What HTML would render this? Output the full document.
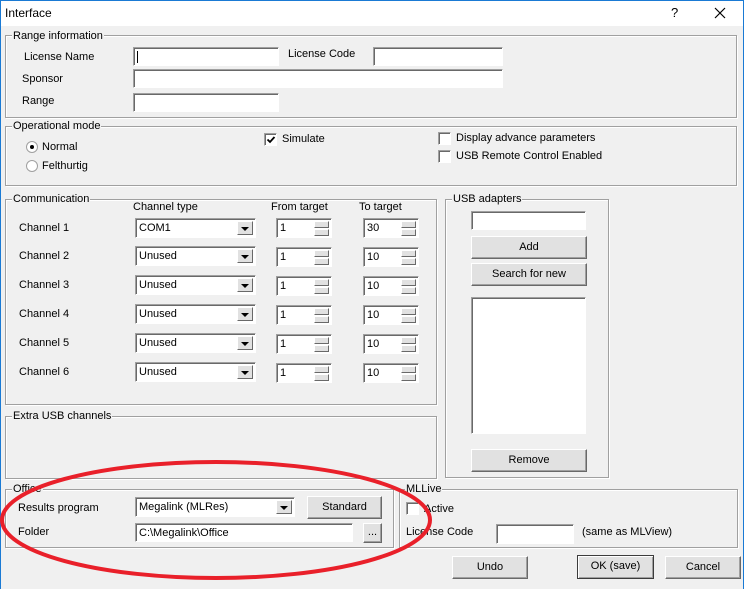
<!DOCTYPE html>
<html><head><meta charset="utf-8"><style>
*{box-sizing:border-box;margin:0;padding:0}
body{width:744px;height:589px;background:#f0f0f0;font-family:"Liberation Sans",sans-serif;font-size:11px;color:#000;position:relative;overflow:hidden}
.a{position:absolute;white-space:nowrap}
.t{margin-top:1px}
.win{position:absolute;left:0;top:0;width:744px;height:589px;border:1px solid #1a7ad4;border-bottom:none}
.title{position:absolute;left:1px;top:1px;width:742px;height:25px;background:#fff}
.g{position:absolute;border:1px solid #a0a0a0;box-shadow:inset 1px 1px #fff,1px 1px #fff}
.gl{position:absolute;background:#f0f0f0;padding:0 1px;line-height:12px}
.in{position:absolute;background:#fff;border:1px solid;border-color:#a0a0a0 #fff #fff #a0a0a0;box-shadow:inset 1px 1px #696969;padding:3px 3px;line-height:13px}
.btn{position:absolute;background:#e1e1e1;border:1px solid;border-color:#fff #696969 #696969 #fff;box-shadow:inset -1px -1px #a0a0a0;text-align:center;line-height:20px}
.dd{position:absolute;right:2px;top:2px;width:16px;bottom:2px;background:#e1e1e1;border:1px solid;border-color:#fff #696969 #696969 #fff}
.dd:after{content:"";position:absolute;left:3px;top:5px;border:4px solid transparent;border-top:4px solid #000;border-bottom:none}
.sp{position:absolute;right:2px;top:2px;width:15px;bottom:2px}
.sp i{position:absolute;left:0;width:15px;height:7px;background:#e1e1e1;border:1px solid;border-color:#fff #696969 #696969 #fff}
.cb{position:absolute;width:13px;height:13px;background:#fff;border:1px solid;border-color:#a0a0a0 #fff #fff #a0a0a0;box-shadow:inset 1px 1px #696969}
.rd{position:absolute;width:12px;height:12px;border-radius:50%;background:#fff;border:1px solid #a0a0a0}
</style></head><body>
<div class="win"></div>
<div class="title"></div>
<div class="a" style="left:5px;top:6px;font-size:12px">Interface</div>
<div class="a" style="left:671px;top:5px;font-size:13px">?</div>
<svg class="a" style="left:714px;top:7px" width="12" height="12"><path d="M1 1L11 11M11 1L1 11" stroke="#000" stroke-width="1.2"/></svg>

<div class="g" style="left:5px;top:35px;width:732px;height:83px"></div>
<div class="gl a" style="left:12px;top:30px">Range information</div>
<div class="a" style="left:24px;top:51px">License Name</div>
<div class="in" style="left:133px;top:47px;width:146px;height:19px"><span style="display:inline-block;width:1px;height:12px;background:#000"></span></div>
<div class="a" style="left:288px;top:48px">License Code</div>
<div class="in" style="left:373px;top:47px;width:130px;height:19px"></div>
<div class="a" style="left:22px;top:73px">Sponsor</div>
<div class="in" style="left:133px;top:69px;width:370px;height:19px"></div>
<div class="a" style="left:22px;top:95px">Range</div>
<div class="in" style="left:133px;top:93px;width:146px;height:19px"></div>

<div class="g" style="left:5px;top:126px;width:732px;height:60px"></div>
<div class="gl a" style="left:12px;top:120px">Operational mode</div>
<div class="rd" style="left:26px;top:141px"><span style="position:absolute;left:3px;top:3px;width:4px;height:4px;background:#000;border-radius:50%"></span></div>
<div class="a" style="left:42px;top:141px">Normal</div>
<div class="rd" style="left:26px;top:160px"></div>
<div class="a" style="left:42px;top:160px">Felthurtig</div>
<div class="cb" style="left:264px;top:133px"><svg style="position:absolute;left:1px;top:1px" width="10" height="10"><path d="M1.5 4.5L4 7L8.5 2" stroke="#000" stroke-width="1.8" fill="none"/></svg></div>
<div class="a" style="left:282px;top:133px">Simulate</div>
<div class="cb" style="left:438px;top:132px"></div>
<div class="a" style="left:456px;top:132px">Display advance parameters</div>
<div class="cb" style="left:438px;top:150px"></div>
<div class="a" style="left:456px;top:150px">USB Remote Control Enabled</div>

<div class="g" style="left:5px;top:199px;width:432px;height:206px"></div>
<div class="gl a" style="left:12px;top:193px">Communication</div>
<div class="a" style="left:133px;top:201px">Channel type</div>
<div class="a" style="left:271px;top:201px">From target</div>
<div class="a" style="left:359px;top:201px">To target</div>

<div class="a" style="left:19px;top:222px">Channel 1</div>
<div class="in" style="left:135px;top:218px;width:121px;height:20px">COM1<div class="dd"></div></div>
<div class="in" style="left:276px;top:218px;width:56px;height:20px">1<div class="sp"><i style="top:0"></i><i style="top:8px"></i></div></div>
<div class="in" style="left:363px;top:218px;width:56px;height:20px">30<div class="sp"><i style="top:0"></i><i style="top:8px"></i></div></div>

<div class="a" style="left:19px;top:250px">Channel 2</div>
<div class="in" style="left:135px;top:246px;width:121px;height:20px">Unused<div class="dd"></div></div>
<div class="in" style="left:276px;top:247px;width:56px;height:20px">1<div class="sp"><i style="top:0"></i><i style="top:8px"></i></div></div>
<div class="in" style="left:363px;top:247px;width:56px;height:20px">10<div class="sp"><i style="top:0"></i><i style="top:8px"></i></div></div>

<div class="a" style="left:19px;top:279px">Channel 3</div>
<div class="in" style="left:135px;top:275px;width:121px;height:20px">Unused<div class="dd"></div></div>
<div class="in" style="left:276px;top:276px;width:56px;height:20px">1<div class="sp"><i style="top:0"></i><i style="top:8px"></i></div></div>
<div class="in" style="left:363px;top:276px;width:56px;height:20px">10<div class="sp"><i style="top:0"></i><i style="top:8px"></i></div></div>

<div class="a" style="left:19px;top:308px">Channel 4</div>
<div class="in" style="left:135px;top:304px;width:121px;height:20px">Unused<div class="dd"></div></div>
<div class="in" style="left:276px;top:305px;width:56px;height:20px">1<div class="sp"><i style="top:0"></i><i style="top:8px"></i></div></div>
<div class="in" style="left:363px;top:305px;width:56px;height:20px">10<div class="sp"><i style="top:0"></i><i style="top:8px"></i></div></div>

<div class="a" style="left:19px;top:337px">Channel 5</div>
<div class="in" style="left:135px;top:333px;width:121px;height:20px">Unused<div class="dd"></div></div>
<div class="in" style="left:276px;top:334px;width:56px;height:20px">1<div class="sp"><i style="top:0"></i><i style="top:8px"></i></div></div>
<div class="in" style="left:363px;top:334px;width:56px;height:20px">10<div class="sp"><i style="top:0"></i><i style="top:8px"></i></div></div>

<div class="a" style="left:19px;top:366px">Channel 6</div>
<div class="in" style="left:135px;top:362px;width:121px;height:20px">Unused<div class="dd"></div></div>
<div class="in" style="left:276px;top:363px;width:56px;height:20px">1<div class="sp"><i style="top:0"></i><i style="top:8px"></i></div></div>
<div class="in" style="left:363px;top:363px;width:56px;height:20px">10<div class="sp"><i style="top:0"></i><i style="top:8px"></i></div></div>

<div class="g" style="left:5px;top:416px;width:432px;height:63px"></div>
<div class="gl a" style="left:12px;top:410px">Extra USB channels</div>

<div class="g" style="left:445px;top:199px;width:164px;height:279px"></div>
<div class="gl a" style="left:452px;top:193px">USB adapters</div>
<div class="in" style="left:471px;top:211px;width:115px;height:19px"></div>
<div class="btn" style="left:471px;top:236px;width:116px;height:23px">Add</div>
<div class="btn" style="left:471px;top:263px;width:116px;height:23px">Search for new</div>
<div class="in" style="left:471px;top:297px;width:115px;height:137px"></div>
<div class="btn" style="left:471px;top:449px;width:116px;height:23px">Remove</div>

<div class="g" style="left:5px;top:489px;width:389px;height:59px"></div>
<div class="gl a" style="left:12px;top:483px">Office</div>
<div class="a" style="left:18px;top:502px">Results program</div>
<div class="in" style="left:135px;top:497px;width:160px;height:20px">Megalink (MLRes)<div class="dd"></div></div>
<div class="btn" style="left:307px;top:496px;width:75px;height:23px">Standard</div>
<div class="a" style="left:18px;top:526px">Folder</div>
<div class="in" style="left:135px;top:523px;width:218px;height:19px">C:\Megalink\Office</div>
<div class="btn" style="left:363px;top:523px;width:19px;height:20px;line-height:17px">...</div>

<div class="g" style="left:399px;top:489px;width:339px;height:59px"></div>
<div class="gl a" style="left:405px;top:483px">MLLive</div>
<div class="cb" style="left:406px;top:502px"></div>
<div class="a" style="left:424px;top:503px">Active</div>
<div class="a" style="left:406px;top:526px">License Code</div>
<div class="in" style="left:496px;top:524px;width:78px;height:20px"></div>
<div class="a" style="left:582px;top:526px">(same as MLView)</div>

<div class="btn" style="left:452px;top:556px;width:76px;height:23px">Undo</div>
<div class="btn" style="left:577px;top:555px;width:77px;height:24px;border:1px solid #3c3c3c;box-shadow:inset 1px 1px #fff,inset -1px -1px #a0a0a0">OK (save)</div>
<div class="btn" style="left:665px;top:556px;width:76px;height:23px">Cancel</div>

<svg class="a" style="left:0;top:0" width="744" height="589"><ellipse cx="216" cy="520" rx="214" ry="58" fill="none" stroke="#e9202a" stroke-width="4"/></svg>
</body></html>
